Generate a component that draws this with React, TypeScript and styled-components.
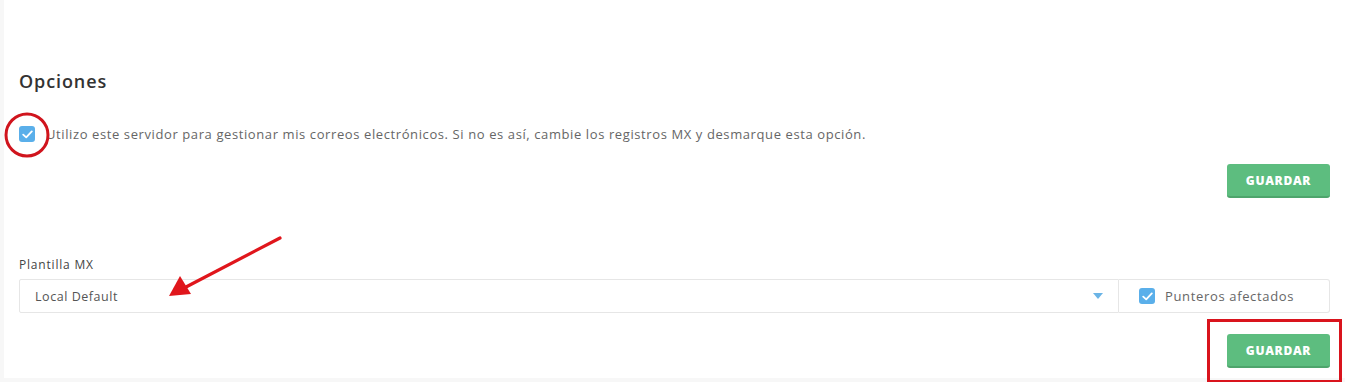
import React from "react";
import styled, { createGlobalStyle } from "styled-components";

const Global = createGlobalStyle`
  html, body { margin: 0; padding: 0; background: #f7f7f7; }
  body { font-family: "Open Sans", "Liberation Sans", sans-serif; }
  * { box-sizing: border-box; }
`;

const Page = styled.div`
  position: relative;
  width: 1345px;
  height: 382px;
  padding: 0 0 4px 4px;
  overflow: hidden;
`;

const Panel = styled.div`
  background: #ffffff;
  height: 378px;
  padding: 70px 15px 0 15px;
  display: flex;
  flex-direction: column;
`;

const Heading = styled.h2`
  margin: 0;
  font-size: 18px;
  line-height: 22px;
  font-weight: 600;
  color: #333;
  letter-spacing: 0.9px;
`;

const CheckRow = styled.label`
  display: flex;
  align-items: center;
  gap: 11px;
  margin-top: 32px;
  height: 20px;
  font-size: 13px;
  color: #666;
  letter-spacing: 0.6px;
`;

const Box = styled.span`
  width: 16px;
  height: 16px;
  border-radius: 3px;
  background: #5aafea;
  display: inline-flex;
  align-items: center;
  justify-content: center;
  flex-shrink: 0;
`;

const Actions = styled.div<{ $top: number }>`
  display: flex;
  justify-content: flex-end;
  margin-top: ${(p) => p.$top}px;
`;

const Button = styled.button`
  width: 103px;
  height: 34px;
  border: none;
  border-bottom: 2px solid #4ea56c;
  border-radius: 3px;
  background: #5dbd7f;
  color: #fff;
  font-family: "Open Sans", "Liberation Sans", sans-serif;
  font-weight: 800;
  font-size: 12px;
  letter-spacing: 0.7px;
  padding: 0;
`;

const Label = styled.div`
  margin-top: 59px;
  font-size: 12px;
  line-height: 16px;
  color: #444;
  letter-spacing: 0.8px;
`;

const InputRow = styled.div`
  display: flex;
  margin-top: 6px;
  height: 34px;
`;

const Select = styled.div`
  flex: 1;
  border: 1px solid #e6e6e6;
  border-radius: 2px 0 0 2px;
  display: flex;
  align-items: center;
  justify-content: space-between;
  padding: 0 15px 0 15px;
  font-size: 12.5px;
  color: #555;
  letter-spacing: 0.55px;
`;

const Caret = styled.span`
  width: 0;
  height: 0;
  border-left: 5px solid transparent;
  border-right: 5px solid transparent;
  border-top: 6px solid #6ab4e6;
`;

const Addon = styled.label`
  width: 211px;
  border: 1px solid #e6e6e6;
  border-left: none;
  border-radius: 0 3px 3px 0;
  display: flex;
  align-items: center;
  gap: 10px;
  padding-left: 20px;
  font-size: 13px;
  color: #666;
  letter-spacing: 0.65px;
`;

const Overlay = styled.svg`
  position: absolute;
  left: 0;
  top: 0;
  pointer-events: none;
`;

const Check = () => (
  <Box>
    <svg width="11" height="9" viewBox="0 0 11 9">
      <path d="M1.2 4.6 L4.2 7.4 L9.8 1.4" fill="none" stroke="#fff" strokeWidth="1.8" strokeLinecap="round" strokeLinejoin="round" />
    </svg>
  </Box>
);

export default function App() {
  return (
    <Page>
      <Global />
      <Panel>
        <Heading>Opciones</Heading>
        <CheckRow>
          <Check />
          Utilizo este servidor para gestionar mis correos electrónicos. Si no es así, cambie los registros MX y desmarque esta opción.
        </CheckRow>
        <Actions $top={20}>
          <Button>GUARDAR</Button>
        </Actions>
        <Label>Plantilla MX</Label>
        <InputRow>
          <Select>
            Local Default
            <Caret />
          </Select>
          <Addon>
            <Check />
            Punteros afectados
          </Addon>
        </InputRow>
        <Actions $top={21}>
          <Button>GUARDAR</Button>
        </Actions>
      </Panel>
      <Overlay width="1345" height="382" viewBox="0 0 1345 382">
        <circle cx="27" cy="135" r="21" fill="none" stroke="#d0141d" strokeWidth="3" />
        <line x1="280" y1="238" x2="186" y2="287" stroke="#e0161c" strokeWidth="3.2" strokeLinecap="round" />
        <polygon points="169,296 180,276 191,294" fill="#e0161c" />
        <rect x="1208.5" y="320.5" width="132" height="61" fill="none" stroke="#d9141d" strokeWidth="3" />
      </Overlay>
    </Page>
  );
}
